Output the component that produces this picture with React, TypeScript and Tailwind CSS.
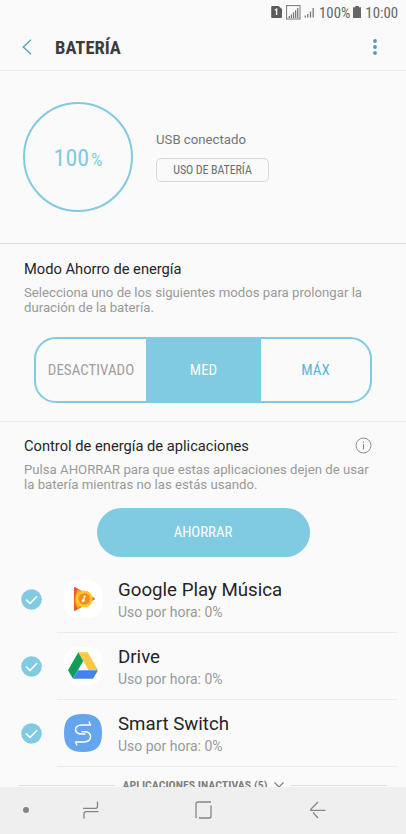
import React from 'react'

interface AppRowProps {
  name: string
  icon: React.ReactNode
}

const condensed = "font-['Roboto_Condensed','Roboto',sans-serif] font-stretch-condensed"

function StatusBar() {
  return (
    <div className="flex h-[24px] shrink-0 items-center justify-end pr-2 text-[#666666]">
      <svg width="11" height="12" viewBox="0 0 11 12" className="mr-[4px]">
        <path d="M1.2 0h6.3L11 3v8a1 1 0 0 1-1 1H1.2a1 1 0 0 1-1-1V1a1 1 0 0 1 1-1z" fill="#5c5c5c" />
        <path d="M4 4.2l1.6-1V9" fill="none" stroke="#fafafa" strokeWidth="1.4" />
      </svg>
      <svg width="15" height="15" viewBox="0 0 15 15" className="mr-[3px]">
        <rect x="0.6" y="0.6" width="13.4" height="13.4" fill="none" stroke="#777" strokeWidth="1" />
        <path d="M3.3 13v-2M5.4 13V9.4M7.5 13V7.3M9.6 13V5.2M11.7 13V3" stroke="#777" strokeWidth="1.3" />
      </svg>
      <svg width="11" height="12" viewBox="0 0 11 12" className="mr-[4px]">
        <path d="M1.3 11.5V9.5M3.8 11.5V8M6.5 11.5V5.5M9.2 11.5V2" stroke="#777" strokeWidth="1.3" />
      </svg>
      <span className={`${condensed} pt-px text-[14.8px] leading-[24px]`}>100%</span>
      <svg width="8" height="12" viewBox="0 0 8 12" className="ml-[3px] mr-[4px]">
        <path d="M2.2 0h3.6v1.2H8V12H0V1.2h2.2z" fill="#666" />
      </svg>
      <span className={`${condensed} pt-px text-[14.8px] leading-[24px]`}>10:00</span>
    </div>
  )
}

function Header() {
  return (
    <header className="flex h-[47px] shrink-0 items-center border-b border-[#ececec] pl-[22px] pr-[29px]">
      <svg width="10" height="16" viewBox="0 0 10 16" fill="none">
        <path d="M9 0.8L1.3 8L9 15.2" stroke="#5aa5c4" strokeWidth="1.5" />
      </svg>
      <h1 className={`${condensed} ml-[23px] flex-1 pt-[3px] text-[18.5px] font-bold text-[#3c3c3c]`}>BATERÍA</h1>
      <svg width="4" height="16" viewBox="0 0 4 16" fill="#4f9dbc">
        <circle cx="2" cy="2" r="1.9" />
        <circle cx="2" cy="8" r="1.9" />
        <circle cx="2" cy="14" r="1.9" />
      </svg>
    </header>
  )
}

function BatteryStatus() {
  return (
    <section className="flex h-[173px] shrink-0 items-center border-b border-[#dcdcdc] pl-[23px]">
      <div className="flex size-[110px] items-center justify-center rounded-full border-2 border-[#80cae2] text-[#80cae2]">
        <div className={`${condensed} flex items-baseline gap-[2px] pt-[2px]`}>
          <span className="text-[24px]">100</span>
          <span className="text-[18px]">%</span>
        </div>
      </div>
      <div className="ml-[23px] flex flex-col items-start">
        <p className="-mt-[2px] text-[13.2px] leading-[18px] text-[#757575]">USB conectado</p>
        <button className={`${condensed} mt-[9px] h-[24px] w-[113px] rounded-[5px] border border-[#d6d6d6] text-[12px] tracking-[-0.1px] text-[#6e6e6e]`}>
          USO DE BATERÍA
        </button>
      </div>
    </section>
  )
}

function PowerMode() {
  return (
    <section className="h-[178px] shrink-0 border-b border-[#ececec] pt-[16px]">
      <h2 className="pl-6 text-[14.7px] leading-[18px] text-[#252525]">Modo Ahorro de energía</h2>
      <p className="mt-[7px] pl-6 text-[13.2px] leading-[15px] text-[#999999]">
        Selecciona uno de los siguientes modos para prolongar la
        <br />
        duración de la batería.
      </p>
      <div className={`${condensed} ml-[34px] mt-[22px] flex h-[66px] w-[338px] overflow-hidden rounded-[22px] border-2 border-[#80cae2] text-[15px]`}>
        <button className="w-[110px] text-[#a0a0a0]">DESACTIVADO</button>
        <button className="w-[115px] bg-[#80cae2] text-white">MED</button>
        <button className="flex-1 text-[#54b8dc]">MÁX</button>
      </div>
    </section>
  )
}

function CheckCircle() {
  return (
    <svg width="21" height="21" viewBox="0 0 21 21" fill="none">
      <circle cx="10.5" cy="10.5" r="10.3" fill="#80cae2" />
      <path d="M5 10.6L9 14.4L16 7.2" stroke="#fff" strokeWidth="1.5" />
    </svg>
  )
}

function PlayMusicIcon() {
  return (
    <svg width="38" height="38" viewBox="0 0 38 38">
      <rect width="38" height="38" rx="13" fill="#fff" />
      <path d="M10 7.8c0-.8.6-1 1.3-.6l19 10.8c.8.5.8 1.3 0 1.7l-19 11c-.7.4-1.3.1-1.3-.7z" fill="#ef5a2c" />
      <path d="M14 9.5L27.5 17.300V20.500L14 28.300C11.500 26 10.800 22 11.300 18C11.600 14.500 12.500 11.500 14 9.500z" fill="#f9a825" />
      <circle cx="20.2" cy="18.9" r="8.5" fill="#ffc928" />
      <circle cx="20.2" cy="18.9" r="5.7" fill="#f68b1f" />
      <circle cx="19.2" cy="20.6" r="1.4" fill="#fff" />
      <path d="M20.1 20.6v-4.4h1.9" fill="none" stroke="#fff" strokeWidth="1.1" />
    </svg>
  )
}

function DriveIcon() {
  return (
    <svg width="38" height="38" viewBox="0 0 38 38">
      <rect width="38" height="38" rx="13" fill="#fff" />
      <path d="M14.3 5.3h9.5L34 23H24.3z" fill="#fdc846" />
      <path d="M14.3 5.3L19.2 14L9 31.8L4 23.2z" fill="#119d58" />
      <path d="M14 23.2h20l-4.9 8.6H9z" fill="#4381ee" />
    </svg>
  )
}

function SmartSwitchIcon() {
  return (
    <svg width="38" height="38" viewBox="0 0 38 38" fill="none">
      <path d="M19 0C32.5 0 38 5.5 38 19S32.5 38 19 38S0 32.5 0 19S5.5 0 19 0z" fill="#65a5ee" />
      <path
        d="M25.2 8L26.4 11H18C9.5 11.2 9.5 20 17.300 20H21M12.800 31L11.600 28H20C28.500 27.800 28.500 18 21.500 17.800H18"
        stroke="#fff"
        strokeWidth="1.5"
        strokeLinecap="round"
        strokeLinejoin="round"
      />
    </svg>
  )
}

function AppRow({ name, icon }: AppRowProps) {
  return (
    <li className="flex h-[67px] pl-[21px] pr-[9px]">
      <div className="flex w-[36px] items-center">
        <CheckCircle />
      </div>
      <div className="flex flex-1 items-center border-b border-[#ebebeb] pl-[7px]">
        {icon}
        <div className="ml-[16px] pt-[3px]">
          <p className="text-[18.7px] leading-[23px] text-[#252525]">{name}</p>
          <p className="text-[14px] leading-[20px] text-[#999999]">Uso por hora: 0%</p>
        </div>
      </div>
    </li>
  )
}

function AppPower() {
  return (
    <section className="min-h-0 flex-1 overflow-hidden pt-[15px]">
      <div className="flex h-[18px] items-center justify-between pl-6 pr-[34px]">
        <h2 className="text-[14.7px] leading-[18px] text-[#252525]">Control de energía de aplicaciones</h2>
        <svg width="17" height="17" viewBox="0 0 17 17" fill="none" stroke="#8a8a8a" className="mb-[2px]">
          <circle cx="8.5" cy="8.5" r="7.5" />
          <path d="M8.5 7v5.5M8.5 4.5v1.3" strokeWidth="1.1" />
        </svg>
      </div>
      <p className="mt-[7px] pl-6 text-[13.2px] leading-[15px] text-[#999999]">
        Pulsa AHORRAR para que estas aplicaciones dejen de usar
        <br />
        la batería mientras no las estás usando.
      </p>
      <button className={`${condensed} mx-auto mt-[16px] block h-[49px] w-[213px] rounded-full bg-[#80cae2] text-[14.8px] text-white`}>
        AHORRAR
      </button>
      <ul className="mt-[9px]">
        <AppRow name="Google Play Música" icon={<PlayMusicIcon />} />
        <AppRow name="Drive" icon={<DriveIcon />} />
        <AppRow name="Smart Switch" icon={<SmartSwitchIcon />} />
      </ul>
      <div className="mt-[8px] flex items-center px-[19px] text-[#808080]">
        <span className="h-px flex-1 bg-[#dedede]" />
        <span className={`${condensed} ml-[7px] text-[11.8px] font-bold leading-[20px]`}>APLICACIONES INACTIVAS (5)</span>
        <svg width="10" height="6" viewBox="0 0 10 6" fill="none" className="ml-[6px] mr-[7px]">
          <path d="M0.5 0.5L5 5L9.5 0.5" stroke="#808080" strokeWidth="1.2" />
        </svg>
        <span className="h-px flex-1 bg-[#dedede]" />
      </div>
    </section>
  )
}

function NavBar() {
  return (
    <nav className="flex h-[47px] shrink-0 items-center bg-[#efefef] pb-[2px] pl-[23px]">
      <span className="size-[6px] rounded-full bg-[#858585]" />
      <svg width="16" height="18" viewBox="0 0 16 18" fill="none" stroke="#858585" strokeWidth="1.3" className="ml-[54px]">
        <path d="M0 7.3h12.5q2 0 2-2V0.5M15.5 10.7H3q-2 0-2 2v5" />
      </svg>
      <svg width="17" height="18" viewBox="0 0 17 18" fill="none" stroke="#858585" strokeWidth="1.3" className="ml-[96px]">
        <path d="M1 17V3q0-2 2-2h13M16 4.5V15q0 2-2 2H4" />
      </svg>
      <svg width="16" height="18" viewBox="0 0 16 18" fill="none" stroke="#858585" strokeWidth="1.3" className="ml-[98px]">
        <path d="M8 1L0.8 8.3V9.3H15.5M3 11.5L8 17" />
      </svg>
    </nav>
  )
}

export default function App() {
  return (
    <div className="flex h-[834px] w-[406px] flex-col overflow-hidden bg-[#fafafa] font-['Roboto',sans-serif]">
      <StatusBar />
      <Header />
      <BatteryStatus />
      <PowerMode />
      <AppPower />
      <NavBar />
    </div>
  )
}
